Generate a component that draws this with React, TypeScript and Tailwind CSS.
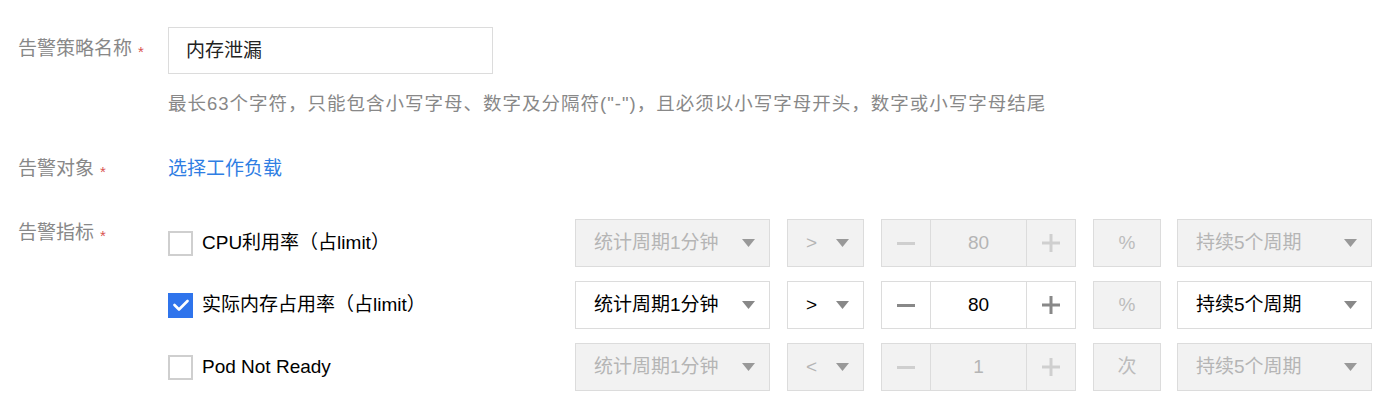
import React from "react";

const font = { fontFamily: '"Liberation Sans", "Noto Sans CJK SC", sans-serif' };

function Arrow({ disabled }: { disabled?: boolean }) {
    return (
        <svg width="13" height="8" viewBox="0 0 13 8" className="shrink-0">
            <path d="M0 0h13L6.5 8z" fill={disabled ? "#999" : "#888"} />
        </svg>
    );
}

function Select({
    value,
    width,
    disabled,
}: {
    value: string;
    width: string;
    disabled?: boolean;
}) {
    return (
        <div
            className={`${width} h-[48px] flex items-center justify-between border border-[#dcdcdc] pl-[18px] pr-[14px] ${
                disabled ? "bg-[#f2f2f2] text-[#b5b5b5]" : "bg-white text-black"
            }`}
        >
            <span>{value}</span>
            <Arrow disabled={disabled} />
        </div>
    );
}

function Stepper({ value, disabled }: { value: string; disabled?: boolean }) {
    const sign = disabled ? "#cfcfcf" : "#888";
    return (
        <div
            className={`w-[195px] h-[48px] flex border border-[#dcdcdc] ${
                disabled ? "bg-[#f2f2f2]" : "bg-white"
            }`}
        >
            <div className="w-[49px] flex items-center justify-center border-r border-[#dcdcdc]">
                <svg width="18" height="18" viewBox="0 0 18 18">
                    <rect x="0" y="8" width="18" height="3" fill={sign} />
                </svg>
            </div>
            <div
                className={`flex-1 flex items-center justify-center ${
                    disabled ? "text-[#b5b5b5]" : "text-black"
                }`}
            >
                {value}
            </div>
            <div className="w-[49px] flex items-center justify-center border-l border-[#dcdcdc]">
                <svg width="18" height="18" viewBox="0 0 18 18">
                    <rect x="0" y="7.5" width="18" height="3" fill={sign} />
                    <rect x="7.5" y="0" width="3" height="18" fill={sign} />
                </svg>
            </div>
        </div>
    );
}

function Checkbox({ checked }: { checked?: boolean }) {
    if (checked)
        return (
            <div className="w-[25px] h-[25px] bg-[#2f74ec] flex items-center justify-center shrink-0">
                <svg width="16" height="12" viewBox="0 0 16 12">
                    <path
                        d="M1.5 6l4.5 4.5L14.5 2"
                        fill="none"
                        stroke="white"
                        strokeWidth="2.6"
                        strokeLinecap="round"
                        strokeLinejoin="round"
                    />
                </svg>
            </div>
        );
    return <div className="w-[25px] h-[25px] bg-white border-2 border-[#cfcfcf] shrink-0" />;
}

const metrics = [
    { name: "CPU利用率（占limit）", checked: false, op: ">", value: "80", unit: "%" },
    { name: "实际内存占用率（占limit）", checked: true, op: ">", value: "80", unit: "%" },
    { name: "Pod Not Ready", checked: false, op: "<", value: "1", unit: "次" },
];

function Label({ text }: { text: string }) {
    return (
        <div className="w-[150px] shrink-0 text-[#888] flex items-start">
            {text}
            <span className="text-[#d9534f] text-[15px] ml-[6px] mt-[3px]">*</span>
        </div>
    );
}

export default function App() {
    return (
        <div className="w-[1400px] h-[404px] bg-white pl-[18px] text-[19px] leading-[24px]" style={font}>
            <div className="flex items-center pt-[27px]">
                <Label text="告警策略名称" />
                <div className="w-[325px] h-[47px] border border-[#dcdcdc] flex items-center px-[17px] text-[#222]">
                    内存泄漏
                </div>
            </div>
            <div className="pl-[150px] mt-[18px] text-[#888] text-[18.5px] tracking-[1px]">
                最长63个字符，只能包含小写字母、数字及分隔符("-")，且必须以小写字母开头，数字或小写字母结尾
            </div>
            <div className="flex mt-[41px]">
                <Label text="告警对象" />
                <a className="text-[#2f7ee3] cursor-pointer">选择工作负载</a>
            </div>
            <div className="flex mt-[37px]">
                <Label text="告警指标" />
                <div className="flex flex-col gap-[14px] -mt-[2px]">
                    {metrics.map((m) => {
                        const disabled = !m.checked;
                        return (
                            <div key={m.name} className="flex items-center h-[48px]">
                                <div className="w-[407px] flex items-center gap-[9px] text-black">
                                    <Checkbox checked={m.checked} />
                                    <span>{m.name}</span>
                                </div>
                                <Select value="统计周期1分钟" width="w-[195px]" disabled={disabled} />
                                <div className="ml-[17px]">
                                    <Select value={m.op} width="w-[77px]" disabled={disabled} />
                                </div>
                                <div className="ml-[17px]">
                                    <Stepper value={m.value} disabled={disabled} />
                                </div>
                                <div className="ml-[17px] w-[68px] h-[48px] flex items-center justify-center border border-[#dcdcdc] bg-[#f2f2f2] text-[#bcbcbc]">
                                    {m.unit}
                                </div>
                                <div className="ml-[16px]">
                                    <Select value="持续5个周期" width="w-[195px]" disabled={disabled} />
                                </div>
                            </div>
                        );
                    })}
                </div>
            </div>
        </div>
    );
}
